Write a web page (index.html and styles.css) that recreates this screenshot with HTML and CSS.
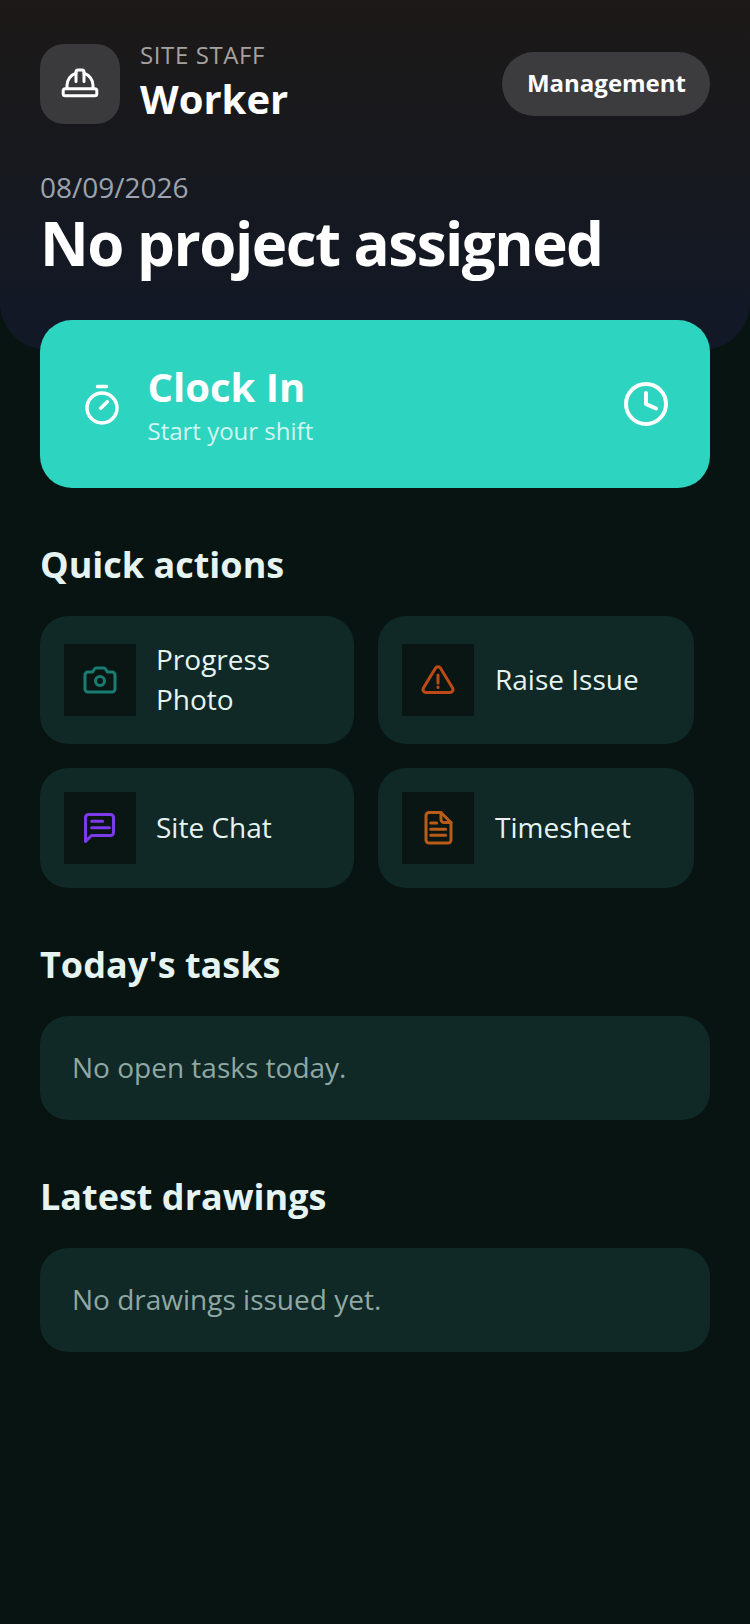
FILE: index.html
```html
<!DOCTYPE html>
<html lang="en">
<head>
    <meta charset="UTF-8">
    <meta name="viewport" content="width=device-width, initial-scale=1.0">
    <title>Worker</title>
    <link rel="stylesheet" href="styles.css">
</head>
<body>

    <header class="hero">
        <div class="hero-top">
            <div class="avatar">
                <svg class="avatar-icon" viewBox="0 0 48 48">
                    <rect x="7.2" y="28.8" width="33.6" height="7" rx="2"/>
                    <path d="M11 28.5v-3a13 13 0 0 1 9-12.4M37 28.5v-3a13 13 0 0 0-9-12.4"/>
                    <path d="M20 21.5V12a2 2 0 0 1 2-2h4a2 2 0 0 1 2 2v9.5"/>
                </svg>
            </div>
            <div class="role">
                <span class="role-label">SITE STAFF</span>
                <span class="role-name">Worker</span>
            </div>
            <button class="switch">Management</button>
        </div>
        <p class="date">08/09/2026</p>
        <h1 class="project">No project assigned</h1>
    </header>

    <main class="content">
        <!-- Clock in -->
        <section class="clock">
            <svg class="clock-watch" viewBox="0 0 48 48">
                <circle cx="24" cy="28" r="15"/>
                <path d="M19.5 6.5h9M22.7 28.3l6.6-6.6"/>
            </svg>
            <div class="clock-text">
                <span class="clock-title">Clock In</span>
                <span class="clock-sub">Start your shift</span>
            </div>
            <svg class="clock-face" viewBox="0 0 48 48">
                <circle cx="24" cy="24" r="20"/>
                <path d="M24 13v11l10 4.5"/>
            </svg>
        </section>

        <!-- Quick actions -->
        <h2 class="heading">Quick actions</h2>
        <div class="actions">
            <a class="action">
                <span class="action-icon">
                    <svg class="icon-teal" viewBox="0 0 40 40">
                        <path d="M8 12h4.5l2-3a2 2 0 0 1 1.6-1h7.800a2 2 0 0 1 1.600 1l2 3H32a3 3 0 0 1 3 3v14a3 3 0 0 1-3 3H8a3 3 0 0 1-3-3V15a3 3 0 0 1 3-3z"/>
                        <circle cx="20" cy="21" r="4.5"/>
                    </svg>
                </span>
                <span class="action-label">Progress Photo</span>
            </a>
            <a class="action">
                <span class="action-icon">
                    <svg class="icon-red" viewBox="0 0 40 40">
                        <path d="M17.6 8L5.400 28a3 3 0 0 0 2.600 4.500h24a3 3 0 0 0 2.600-4.500L22.400 8a2.800 2.800 0 0 0-4.800 0z"/>
                        <path d="M20 15v8M20 27v.5"/>
                    </svg>
                </span>
                <span class="action-label">Raise Issue</span>
            </a>
            <a class="action">
                <span class="action-icon">
                    <svg class="icon-purple" viewBox="0 0 40 40">
                        <path d="M5.5 33.500v-24a3 3 0 0 1 3-3h22a3 3 0 0 1 3 3v15a3 3 0 0 1-3 3H11.500z"/>
                        <path d="M11.700 13.300h11M11.700 19.700h17.600"/>
                    </svg>
                </span>
                <span class="action-label">Site Chat</span>
            </a>
            <a class="action">
                <span class="action-icon">
                    <svg class="icon-orange" viewBox="0 0 40 40">
                        <path d="M11 4.500h12l10 10V32a3 3 0 0 1-3 3H11a3 3 0 0 1-3-3V7.500a3 3 0 0 1 3-3z"/>
                        <path d="M23 4.500v7a3 3 0 0 0 3 3h7"/>
                        <path d="M12.700 15h6M12.700 21.300h15M12.700 27.300h15"/>
                    </svg>
                </span>
                <span class="action-label">Timesheet</span>
            </a>
        </div>

        <!-- Tasks -->
        <h2 class="heading">Today's tasks</h2>
        <div class="empty">No open tasks today.</div>

        <!-- Drawings -->
        <h2 class="heading">Latest drawings</h2>
        <div class="empty">No drawings issued yet.</div>
    </main>

</body>
</html>
```

FILE: styles.css
```css
* {
    box-sizing: border-box;
}
body {
    margin: 0;
    min-height: 1624px;
    font-family: "Open Sans", sans-serif;
    background-color: #071412;
    color: #e6f4f1;
}
svg {
    display: block;
    fill: none;
    stroke: currentColor;
    stroke-linecap: round;
    stroke-linejoin: round;
}

/* Header */
.hero {
    height: 350px;
    padding: 44px 40px 0;
    background: linear-gradient(180deg, #1c1917, #111827);
    border-radius: 0 0 48px 48px;
}
.hero-top {
    height: 80px;
    display: flex;
    align-items: center;
}
.avatar {
    width: 80px;
    height: 80px;
    display: flex;
    align-items: center;
    justify-content: center;
    background-color: #3a393c;
    border-radius: 24px;
    color: white;
}
.avatar-icon {
    width: 48px;
    height: 48px;
    stroke-width: 3;
}
.role {
    flex: 1;
    display: flex;
    flex-direction: column;
    margin-left: 20px;
    padding-bottom: 6px;
}
.role-label {
    font-size: 24px;
    line-height: 32px;
    letter-spacing: 0.6px;
    color: #a8a29e;
}
.role-name {
    margin-top: 4px;
    font-size: 40px;
    line-height: 48px;
    font-weight: 700;
    color: white;
}
.switch {
    height: 64px;
    padding: 0 24px 4px 25px;
    border: none;
    border-radius: 32px;
    background-color: #3c3b3e;
    color: white;
    font-family: inherit;
    font-size: 24px;
    font-weight: 700;
}
.date {
    margin: 43px 0 0;
    font-size: 28px;
    line-height: 40px;
    color: #9ca3af;
}
.project {
    margin: 0;
    font-size: 60px;
    line-height: 72px;
    font-weight: 700;
    letter-spacing: -1.5px;
    color: white;
}

/* Page content */
.content {
    padding: 0 40px;
}
.clock {
    height: 168px;
    margin-top: -30px;
    padding: 0 40px 0 38px;
    display: flex;
    align-items: center;
    background-color: #2dd4bf;
    border-radius: 32px;
    color: white;
}
.clock-watch {
    width: 48px;
    height: 48px;
    stroke-width: 3.5;
}
.clock-face {
    width: 48px;
    height: 48px;
    stroke-width: 4;
}
.clock-text {
    flex: 1;
    display: flex;
    flex-direction: column;
    margin-left: 21.5px;
}
.clock-title {
    font-size: 40px;
    line-height: 52px;
    font-weight: 700;
}
.clock-sub {
    margin-top: 2px;
    font-size: 24px;
    line-height: 32px;
    color: #d5f6f1;
}
.heading {
    margin: 53px 0 27px;
    font-size: 36px;
    line-height: 48px;
    font-weight: 700;
}
.actions {
    display: grid;
    grid-template-columns: 314px 316px;
    grid-template-rows: 128px 120px;
    gap: 24px;
}
.action {
    display: flex;
    align-items: center;
    padding: 0 24px;
    background-color: #102826;
    border-radius: 28px;
}
.action-icon {
    flex: none;
    width: 72px;
    height: 72px;
    display: flex;
    align-items: center;
    justify-content: center;
    background-color: #091614;
}
.action-icon svg {
    width: 40px;
    height: 40px;
    stroke-width: 3;
}
.action-label {
    margin-left: 20px;
    padding-bottom: 2px;
    font-size: 28px;
    line-height: 40px;
}
.action:nth-child(even) .action-label {
    margin-left: 21px;
}
.icon-teal {
    color: #1a7d72;
}
.icon-red {
    color: #bd4a17;
}
.icon-purple {
    color: #7c3aed;
}
.icon-orange {
    color: #b85c18;
}
.empty {
    height: 104px;
    padding: 0 32px 2px;
    display: flex;
    align-items: center;
    background-color: #102826;
    border-radius: 28px;
    font-size: 28px;
    color: #8fa8a3;
}
```
